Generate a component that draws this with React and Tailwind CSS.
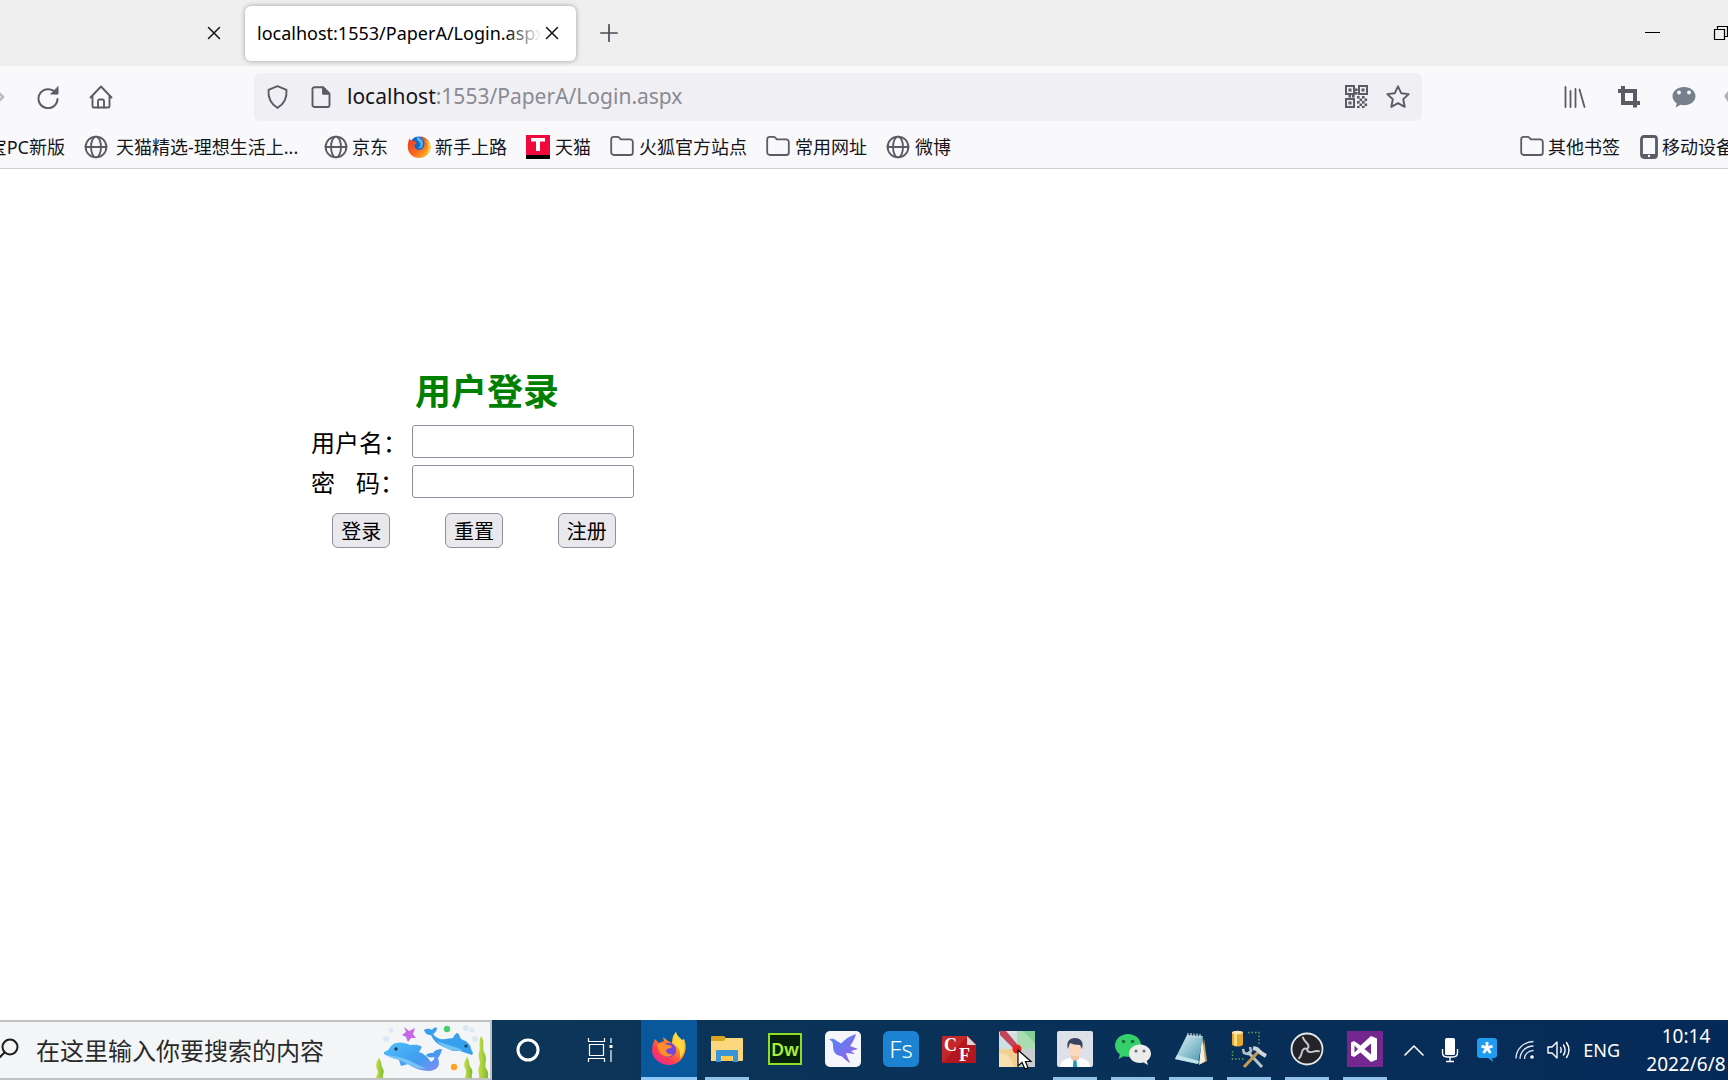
const ui = "font-['Noto_Sans','Noto_Sans_CJK_SC',sans-serif]";
const stroke = { fill: "none", stroke: "currentColor", strokeLinecap: "round", strokeLinejoin: "round" };

function CloseIcon() {
  return (
    <svg width="14" height="14" viewBox="0 0 14 14" {...stroke} strokeWidth="1.5" aria-hidden="true">
      <path d="M1.500 1.500l11 11M12.500 1.500l-11 11" />
    </svg>
  );
}

function Globe() {
  return (
    <svg className="shrink-0" width="24" height="24" viewBox="0 0 24 24" {...stroke} strokeWidth="1.9" aria-hidden="true">
      <circle cx="12" cy="12" r="10.4" />
      <ellipse cx="12" cy="12" rx="5" ry="10.4" />
      <path d="M1.600 12h20.800" />
    </svg>
  );
}

function Folder() {
  return (
    <svg className="shrink-0" width="24" height="24" viewBox="0 0 24 24" {...stroke} strokeWidth="1.8" aria-hidden="true">
      <path d="M1.2 4.2a2.4 2.4 0 0 1 2.4-2.4h3.8c.8 0 1.4.3 1.900.9l1.500 1.700h9.400a2.6 2.6 0 0 1 2.600 2.600v10.400a2.600 2.600 0 0 1-2.600 2.600H3.800a2.600 2.600 0 0 1-2.600-2.600z" />
    </svg>
  );
}

function OldFirefox() {
  return (
    <svg className="shrink-0" width="24" height="24" viewBox="0 0 24 24" aria-hidden="true">
      <defs>
        <linearGradient id="foxOld" x1="0" y1="0" x2="1" y2="1">
          <stop offset="0" stopColor="#e8322f" />
          <stop offset=".55" stopColor="#fb6a1e" />
          <stop offset="1" stopColor="#ffd12e" />
        </linearGradient>
      </defs>
      <circle cx="11.500" cy="10" r="8.500" fill="#1668c4" />
      <path d="M10 2c-1 3 2 4 3 6s0 4-2 5c3 1 5-1 5-4 0-4-2-6-6-7z" fill="#4fb3ee" />
      <path d="M2.500 3.600l1.700 2.200c1.200-.5 2.400-.4 3.600.2l2 2.400-2.400 1.400c-.2 3.400 2 5.400 4.800 5.200 3.800-.2 6-3.600 5-8C16.600 4.500 15.500 3 13.500 1.400c6 .4 10 5.300 10 10.600 0 6-5 11-11.500 11S.8 18 .8 12c0-3.500.7-6.300 1.700-8.400z" fill="url(#foxOld)" />
      <path d="M18 5c4 4 4.500 10 0 14.500 4-1 5.500-4.500 5.500-7.500C23.500 9 21.500 6 18 5z" fill="#ffc93a" />
    </svg>
  );
}

function Bookmark({ icon, children, className = "" }) {
  return (
    <a href="#" className={`flex shrink-0 items-center gap-1 whitespace-nowrap ${className}`}>
      <span className="text-[#5b5b66]">{icon}</span>
      <span className="text-[#15141a]">{children}</span>
    </a>
  );
}

function TabBar() {
  return (
    <header className="flex h-[66px] items-center overflow-hidden bg-[#efefef] text-[#15141a]">
      <div className="flex w-[245px] shrink-0 justify-end pr-6">
        <button type="button" aria-label="关闭标签页"><CloseIcon /></button>
      </div>
      <div className="flex h-[55px] w-[331px] shrink-0 items-center rounded-md bg-white px-3 shadow-[0_0_5px_rgba(0,0,0,0.35)]">
        <div className="relative w-[284px] overflow-hidden whitespace-nowrap text-lg text-black">
          localhost:1553/PaperA/Login.aspx
          <span className="absolute inset-y-0 right-0 w-9 bg-linear-to-r from-transparent to-white" />
        </div>
        <button type="button" aria-label="关闭标签页" className="ml-1"><CloseIcon /></button>
      </div>
      <button type="button" aria-label="新建标签页" className="ml-6 text-[#4b4b55]">
        <svg width="18" height="18" viewBox="0 0 18 18" {...stroke} strokeWidth="1.7" aria-hidden="true">
          <path d="M9 .8v16.400M.8 9h16.400" />
        </svg>
      </button>
      <div className="ml-auto flex shrink-0 items-center gap-[52px] text-black">
        <button type="button" aria-label="最小化" className="h-4 w-4">
          <svg width="16" height="16" viewBox="0 0 16 16" aria-hidden="true"><path d="M0 7.500h15" stroke="currentColor" /></svg>
        </button>
        <button type="button" aria-label="还原" className="h-4 w-[15px] overflow-hidden">
          <svg width="18" height="16" viewBox="0 0 18 16" fill="none" stroke="currentColor" strokeWidth="1.2" aria-hidden="true">
            <path d="M1.500 4.500h10v10h-10zM4.500 4.500v-3h10v10h-3" />
          </svg>
        </button>
      </div>
    </header>
  );
}

function QrIcon() {
  const finders = [[0, 0], [13, 0], [0, 13]];
  const cells = [[12, 11], [17, 11], [14.500, 13.500], [19.500, 13.500], [12, 16], [17, 16], [14.500, 18.500], [19.500, 18.500], [12, 21], [17, 21], [10, 3.500], [10, 7], [3.500, 10], [7, 10]];
  return (
    <svg width="23" height="23" viewBox="0 0 23 23" aria-hidden="true">
      {finders.map(([x, y]) => (
        <g key={`${x}-${y}`}>
          <rect x={x + 1} y={y + 1} width="8" height="8" fill="none" stroke="currentColor" strokeWidth="2" />
          <rect x={x + 3.500} y={y + 3.500} width="3" height="3" fill="currentColor" />
        </g>
      ))}
      {cells.map(([x, y]) => <rect key={`${x}.${y}`} x={x} y={y} width="2.600" height="2.600" fill="currentColor" />)}
    </svg>
  );
}

function NavBar() {
  return (
    <nav className="flex h-[61px] items-center overflow-hidden text-[#5b5b66]">
      <div className="flex w-[254px] shrink-0 items-center">
        <button type="button" aria-label="前进" className="w-9 text-[#b9b9bf]">
          <svg width="5" height="12" viewBox="0 0 5 12" {...stroke} strokeWidth="2.500" aria-hidden="true"><path d="M-1 2l4 4-4 4" /></svg>
        </button>
        <button type="button" aria-label="刷新">
          <svg width="24" height="24" viewBox="0 0 24 24" {...stroke} strokeWidth="2" aria-hidden="true">
            <path d="M20 8.500A9.500 9.500 0 1 0 21.500 14" />
            <path d="M22 2v7h-7z" fill="currentColor" strokeWidth="1" />
          </svg>
        </button>
        <button type="button" aria-label="主页" className="ml-[29px]">
          <svg width="24" height="24" viewBox="0 0 24 24" {...stroke} strokeWidth="1.900" aria-hidden="true">
            <path d="M1.500 12.500L12 1.500l10.500 11M3.500 11v10.200a1.300 1.300 0 0 0 1.300 1.300h14.400a1.300 1.300 0 0 0 1.300-1.300V11" />
            <path d="M9 22.500v-6.500a1.500 1.500 0 0 1 1.500-1.500h3a1.500 1.500 0 0 1 1.500 1.500v6.500" />
          </svg>
        </button>
      </div>
      <div className="flex h-12 flex-1 items-center rounded-md bg-[#f0eff4] px-3">
        <svg width="23" height="24" viewBox="0 0 22 24" {...stroke} strokeWidth="1.900" aria-hidden="true">
          <path d="M11 1.200l9 3.600c.5 8-1.500 14-9 18C3.500 18.800 1.500 12.800 2 4.800z" />
        </svg>
        <svg className="ml-[22px]" width="20" height="22" viewBox="0 0 20 22" {...stroke} strokeWidth="1.900" aria-hidden="true">
          <path d="M3.500 1.200H12l6.500 6.500V19a2 2 0 0 1-2 2h-13a2 2 0 0 1-2-2V3.200a2 2 0 0 1 2-2z" />
          <path d="M12 1.500v6.200h6.200z" fill="currentColor" />
        </svg>
        <p className="ml-4 flex-1 whitespace-nowrap text-[21px] text-[#8a8a92]">
          <span className="text-[#15141a]">localhost</span>:1553/PaperA/Login.aspx
        </p>
        <button type="button" aria-label="二维码" className="mr-[18px]"><QrIcon /></button>
        <button type="button" aria-label="添加书签">
          <svg width="24" height="24" viewBox="0 0 24 24" {...stroke} strokeWidth="1.900" aria-hidden="true">
            <path d="M12 1.300l3.200 6.900 7.500.9-5.500 5.200 1.500 7.500L12 18.100l-6.700 3.700 1.500-7.500L1.300 9.100l7.500-.9z" />
          </svg>
        </button>
      </div>
      <div className="ml-[142px] flex shrink-0 items-center gap-8">
        <button type="button" aria-label="书库">
          <svg width="22" height="22" viewBox="0 0 22 22" {...stroke} strokeWidth="1.800" aria-hidden="true">
            <path d="M1.500 1v20M6.500 5v16M11.500 3v18M15.500 3.500L20.500 21" />
          </svg>
        </button>
        <button type="button" aria-label="截图">
          <svg width="22" height="22" viewBox="0 0 22 22" fill="none" stroke="currentColor" strokeWidth="4" aria-hidden="true">
            <path d="M0 5h17v16.500M5 0v17h17" />
          </svg>
        </button>
        <button type="button" aria-label="消息" className="text-[#75808c]">
          <svg width="24" height="22" viewBox="0 0 24 22" fill="currentColor" aria-hidden="true">
            <path d="M12 1C5.500 1 .5 5 .5 10.200c0 3 1.700 5.500 4.300 7.200L3.500 21.500l5-2.700c1 .3 2.200.4 3.500.4 6.500 0 11.500-4 11.500-9S18.500 1 12 1z" />
            <circle cx="7" cy="6.500" r="1.900" fill="#f9f9fc" />
            <circle cx="17" cy="6.500" r="1.900" fill="#f9f9fc" />
          </svg>
        </button>
        <svg className="-ml-1" width="4" height="12" viewBox="0 0 4 12" fill="#b0b2b8" aria-hidden="true"><path d="M4 0L0 5l4 6z" /></svg>
      </div>
    </nav>
  );
}

function BookmarksBar() {
  return (
    <div className="flex h-[42px] items-center overflow-hidden border-b border-[#cfcfd4] pb-0.5 text-lg">
      <div className="flex w-[65px] shrink-0 justify-end overflow-hidden whitespace-nowrap text-[#15141a]">
        <a href="#">淘宝PC新版</a>
      </div>
      <div className="ml-[19px] flex items-center gap-[19px]">
        <Bookmark icon={<Globe />} className="w-[221px]"><span className="ml-1">天猫精选-理想生活上...</span></Bookmark>
        <Bookmark icon={<Globe />}>京东</Bookmark>
        <Bookmark icon={<OldFirefox />}>新手上路</Bookmark>
        <Bookmark icon={
          <span className="flex h-6 w-6 items-start justify-center border-b-4 border-black bg-[#f0093a] text-white">
            <svg width="14" height="16" viewBox="0 0 14 16" aria-hidden="true"><path d="M0 3h14v3.500H9V16H5V6.500H0z" fill="currentColor" /></svg>
          </span>
        }><span className="ml-px">天猫</span></Bookmark>
        <Bookmark icon={<Folder />}><span className="ml-px">火狐官方站点</span></Bookmark>
        <Bookmark icon={<Folder />}><span className="ml-px">常用网址</span></Bookmark>
        <Bookmark icon={<Globe />}><span className="ml-px">微博</span></Bookmark>
      </div>
      <div className="ml-auto flex shrink-0 items-center gap-5">
        <Bookmark icon={<Folder />}>其他书签</Bookmark>
        <Bookmark className="w-[88px] overflow-hidden" icon={
          <svg width="18" height="24" viewBox="0 0 18 24" aria-hidden="true">
            <rect x="1.500" y="1.500" width="15" height="21" rx="2.500" fill="none" stroke="currentColor" strokeWidth="2.800" />
            <path d="M2 19h14v3H2z" fill="currentColor" />
            <circle cx="9" cy="21" r="1.200" fill="#fff" />
          </svg>
        }>移动设备上的书签</Bookmark>
      </div>
    </div>
  );
}

function LoginForm() {
  const field = "h-[33px] w-[222px] rounded-[3px] border border-[#8f8f9d] bg-white px-2 text-lg outline-none";
  const label = "w-[102px] shrink-0 pl-px";
  return (
    <form className="mt-[194px] ml-[305px] w-[338px] font-['Noto_Sans_CJK_SC',sans-serif] text-black" onSubmit={(e) => e.preventDefault()}>
      <h1 className="pl-[110px] text-4xl leading-[52px] font-bold text-[#008000]">用户登录</h1>
      <div className="mt-2.5 flex flex-col gap-[7px] pl-[5px] text-2xl leading-[33px]">
        <div className="flex items-center">
          <label htmlFor="user" className={label}>用户名：</label>
          <input id="user" type="text" className={field} />
        </div>
        <div className="flex items-center">
          <label htmlFor="pass" className={`${label} flex gap-[21px] pl-[3px]`}><span>密</span><span>码：</span></label>
          <input id="pass" type="password" className={field} />
        </div>
      </div>
      <div className="mt-[15px] grid grid-cols-3 justify-items-center text-xl">
        {["登录", "重置", "注册"].map((t) => (
          <button key={t} type={t === "登录" ? "submit" : t === "重置" ? "reset" : "button"} className="h-[35px] w-[58px] rounded-md border border-[#8f8f9d] bg-[#e9e9ed] leading-8">
            {t}
          </button>
        ))}
      </div>
    </form>
  );
}

function Dolphins() {
  return (
    <svg className="ml-auto shrink-0" width="116" height="56" viewBox="0 0 116 56" aria-hidden="true">
      <defs>
        <linearGradient id="dol" x1="0" y1="0" x2="1" y2="1">
          <stop offset="0" stopColor="#4fc0f8" />
          <stop offset=".6" stopColor="#3f9cf0" />
          <stop offset="1" stopColor="#8a8cf4" />
        </linearGradient>
        <linearGradient id="weed" x1="0" y1="0" x2="1" y2="0">
          <stop offset="0" stopColor="#c6de4a" />
          <stop offset="1" stopColor="#7dbb2c" />
        </linearGradient>
      </defs>
      <g fill="#dbe9f5">
        <circle cx="12" cy="17" r="3" /><circle cx="17" cy="8" r="2.500" /><circle cx="92" cy="6" r="3" /><circle cx="98" cy="8" r="2.500" /><circle cx="101" cy="17" r="3" />
      </g>
      <path d="M30 5l5 4 6-3-2 6 3 4-5 0-3 4-2-5-4-2 4-3z" fill="#c56ae6" />
      <path d="M10 30C14 29 15 27 17 24 21 19 30 20 36 23 40 23 44 22 48 25L45 30C51 32 54 36 57 40 60 38 61 36 60 35 56 36 53 35 52 33 54 31 57 31 59 31 61 28 64 27 68 27 67 31 66 34 64 36 67 44 63 49 54 49 44 48 38 45 34 42L27 44 25 38C18 36 13 34 10 32z" fill="url(#dol)" />
      <path d="M12 33c8 1 14 2 20 4 8 3 13 7 20 9-7 2-14-1-19-4l-8-4c-5-1-10-3-13-5z" fill="#8ad2fa" opacity=".7" />
      <circle cx="22" cy="27" r="1.700" fill="#143a5c" />
      <path d="M50 8C53 6 56 7 58 8 59 6 61 5 63 6 63 9 61 11 59 12 62 16 66 18 71 17L79 16C80 13 82 11 84 11 85 13 86 15 87 17 94 19 97 24 97 27L99 31 98 33C94 32 90 30 86 29L79 29 72 26C66 24 60 20 57 13 53 13 51 11 50 8z" fill="#36a0ee" />
      <path d="M63 19c8 4 18 5 26 9l-3 1c-9 0-18-3-23-10z" fill="#8ad2fa" opacity=".7" />
      <circle cx="92" cy="24" r="1.600" fill="#143a5c" />
      <circle cx="73" cy="7" r="3.200" fill="#47cf74" />
      <circle cx="80" cy="45" r="3.200" fill="#ffa31f" />
      <g fill="url(#weed)">
        <path d="M5 36c3 4 2 8 4 11 2 4-1 5 0 9H2c1-4 3-5 1-9s0-8 2-11z" />
        <path d="M93 35c3 4 1 7 4 11s0 6 1 10h-7c1-4 2-6 0-10s0-7 2-11z" />
        <path d="M107 14c5 6 0 12 4 18 3 7-2 10 2 16 2 4 1 5 1 8h-9c1-4-2-6 0-11 3-6-2-9 0-14 2-7-1-11 2-17z" />
      </g>
    </svg>
  );
}

function FirefoxLogo() {
  return (
    <svg width="36" height="36" viewBox="0 0 36 36" aria-hidden="true">
      <defs>
        <linearGradient id="fx" x1=".85" y1=".1" x2=".2" y2=".9">
          <stop offset="0" stopColor="#ffe14d" />
          <stop offset=".4" stopColor="#ff8a2b" />
          <stop offset=".75" stopColor="#ff3f4f" />
          <stop offset="1" stopColor="#e92b8a" />
        </linearGradient>
      </defs>
      <path d="M4 8l4 4 5-2-1-4 5 4 4 2c0-5 1-8 4-11 1 5 4 5 6 8l2-1c2 5 2 9 1 13-2 8-8 13-16 13S1 28 1 20c0-5 1-8 3-12z" fill="url(#fx)" />
      <path d="M21 12c3-6 2-8 4-11 1 5 5 6 7 11 2 6 1 11-3 15 1-7-2-12-8-15z" fill="#ffd83f" />
      <circle cx="18" cy="19" r="7.200" fill="#7348d8" />
      <path d="M7 13c3-2 6-1 9 1 2 0 4 0 5 2-2 2-5 1-6 3 0 3 3 5 7 4-3 4-10 3-13-1-2-3-3-6-2-9z" fill="#ff8d2c" />
    </svg>
  );
}

function ExplorerLogo() {
  return (
    <svg width="34" height="30" viewBox="0 0 34 30" aria-hidden="true">
      <path d="M1 3a1 1 0 0 1 1-1h12l2 2v4H1z" fill="#d9a520" />
      <path d="M1 7h13l2-3h16a1 1 0 0 1 1 1v21a1 1 0 0 1-1 1H1z" fill="#fbd77e" />
      <path d="M6 28V17a1 1 0 0 1 1-1h20a1 1 0 0 1 1 1v11h-5v-6H11v6z" fill="#3a94d6" />
      <path d="M12 22h10v5H12z" fill="#ffc84a" />
    </svg>
  );
}

function DwLogo() {
  return <span className="flex h-8 w-[34px] items-center justify-center border-2 border-[#8ce01f] bg-[#07200b] text-lg leading-none font-semibold text-[#a8f23c]">Dw</span>;
}

function BirdLogo() {
  return (
    <svg width="36" height="36" viewBox="0 0 36 36" aria-hidden="true">
      <defs>
        <linearGradient id="bird" x1="0" y1="0" x2="1" y2="1">
          <stop offset="0" stopColor="#4a8cf6" />
          <stop offset="1" stopColor="#9d5be8" />
        </linearGradient>
      </defs>
      <rect width="36" height="36" rx="5" fill="#f4f6fc" />
      <path d="M4 8.500c3-1.500 5-1 7 1l5 3C20 8 25 5 31 3c-1 4-3 8-6 12l8 3-7 2 4 3-9-1c1 4 3 7 4 10-5-3-7-6-9-7C9 24 8 19 8 14c0-3-1-4-4-5.500z" fill="url(#bird)" />
    </svg>
  );
}

function FsLogo() {
  return <span className="flex h-9 w-9 items-center justify-center rounded-md bg-[#1c83d2] text-2xl leading-none font-light text-white">Fs</span>;
}

function CfLogo() {
  return (
    <svg width="36" height="32" viewBox="0 0 36 32" aria-hidden="true">
      <path d="M1 3h26l8 8v19H1z" fill="#b3161d" />
      <path d="M1 3h26L1 30z" fill="#c4272a" />
      <path d="M26 3l9 9h-9z" fill="#d8d8d8" />
      <g fill="#fff" fontFamily="Liberation Serif, serif" fontWeight="bold">
        <text x="3" y="18" fontSize="18">C</text>
        <text x="18" y="28" fontSize="18">F</text>
      </g>
    </svg>
  );
}

function MapLogo() {
  return (
    <span className="relative block h-9 w-9">
      <svg width="36" height="36" viewBox="0 0 36 36" aria-hidden="true">
        <rect width="36" height="36" rx="2" fill="#e6e6e6" />
        <path d="M0 2h18v16H0z" fill="#cfe0e4" />
        <path d="M18 0h18v18H18z" fill="#a9dcb0" />
        <path d="M24 0h12v12z" fill="#84cf94" />
        <path d="M0 18h18v18H0z" fill="#f4cf94" />
        <path d="M0 22c8 0 14 6 14 14H0z" fill="#f9dfb0" />
        <path d="M18 18h18v18H18z" fill="#c9cdd0" />
        <path d="M1 0h6l11 13-4 4L1 4z" fill="#c2455a" />
        <circle cx="18" cy="18" r="4.500" fill="#e3251f" />
      </svg>
      <svg className="absolute top-[18px] left-[18px]" width="16" height="22" viewBox="0 0 16 22" aria-hidden="true">
        <path d="M1 1v16l4-3.500L8 20l3-1.300L8.500 12.500H14z" fill="#fff" stroke="#000" strokeWidth="1.200" />
      </svg>
    </span>
  );
}

function PersonLogo() {
  return (
    <svg width="36" height="36" viewBox="0 0 36 36" aria-hidden="true">
      <rect width="36" height="36" rx="2" fill="#dfe1e8" />
      <path d="M3 36c1-6 4-8 10-9h10c6 1 9 3 10 9z" fill="#fff" />
      <path d="M14 22h8v6l-4 3-4-3z" fill="#f3c6a6" />
      <ellipse cx="18" cy="18" rx="6" ry="7.500" fill="#fad9bf" />
      <path d="M11 18c-2-7 1-11 7-11s9 4 7 11l-2-4c-4 0-8-1-10-2z" fill="#3a4464" />
      <path d="M16.500 29.500h3l.6 6.500h-4.200z" fill="#1a9bb8" />
    </svg>
  );
}

function WechatLogo() {
  return (
    <svg width="38" height="34" viewBox="0 0 38 34" aria-hidden="true">
      <path d="M14 2C7 2 1 7 1 13.500c0 3.600 1.900 6.700 4.900 8.900L4.500 27l5.400-2.800c1.300.4 2.700.6 4.100.6 7.200 0 13-5 13-11.400S21.200 2 14 2z" fill="#35cf6c" />
      <circle cx="9.500" cy="9.500" r="1.800" fill="#14713a" /><circle cx="18.500" cy="9.500" r="1.800" fill="#14713a" />
      <path d="M26 12.500c-6 0-11 4-11 9.300s5 9.300 11 9.300c1.300 0 2.500-.2 3.600-.5l4.400 2.400-1.200-4c2.600-1.700 4.200-4.300 4.200-7.200 0-5.300-5-9.300-11-9.300z" fill="#ececec" />
      <circle cx="22" cy="19" r="1.500" fill="#6e6e6e" /><circle cx="30" cy="19" r="1.500" fill="#6e6e6e" />
    </svg>
  );
}

function NotepadLogo() {
  return (
    <svg width="34" height="34" viewBox="0 0 34 34" aria-hidden="true">
      <defs>
        <linearGradient id="note" x1="0" y1="0" x2="1" y2="1">
          <stop offset="0" stopColor="#e6f5f8" />
          <stop offset="1" stopColor="#3f93ab" />
        </linearGradient>
      </defs>
      <path d="M30 6l3 23-6 3z" fill="#c8a15c" />
      <path d="M28 4l3 25-6 4z" fill="#f1efe6" />
      <path d="M13 3l16 1-5 28L1 27z" fill="url(#note)" />
      <path d="M1 27l23 5 1-3L3 23z" fill="#c4e4ec" />
      <path d="M14 1v4M17 1v4M20 1.500v4M23 1.500v4M26 2v4" stroke="#d5dde0" strokeWidth="1.200" />
    </svg>
  );
}

function ToolsLogo() {
  return (
    <svg width="36" height="38" viewBox="0 0 36 38" aria-hidden="true">
      <path d="M1 2h11v13q-5.500 3-11 0z" fill="#e7a92c" /><path d="M3 2h3v14l-3-.5z" fill="#fbdc86" />
      <ellipse cx="6.500" cy="2.500" rx="5.500" ry="1.800" fill="#f9e6b0" />
      <path d="M17 2.500h11v13M1.500 21v8h11" fill="none" stroke="#5aa355" strokeWidth="1.500" strokeDasharray="1.500 2" />
      <path d="M17 22l14 15" stroke="#b9c3cc" strokeWidth="3" />
      <path d="M12 19l1 4 4 1 3-3-1-4" fill="none" stroke="#b9c3cc" strokeWidth="2.500" />
      <path d="M13 37l14-15" stroke="#c79a4c" strokeWidth="3" />
      <path d="M22 18l4 1 4 4 5 3" fill="none" stroke="#cdd5db" strokeWidth="4" />
    </svg>
  );
}

function ObsLogo() {
  return (
    <svg width="34" height="34" viewBox="0 0 34 34" aria-hidden="true">
      <circle cx="17" cy="17" r="15.500" fill="#25232a" stroke="#e8e8ea" strokeWidth="1.800" />
      <g fill="none" stroke="#c9c9ce" strokeWidth="1.900" strokeLinecap="round">
        {[0, 120, 240].map((a) => (
          <path key={a} d="M17 17c1.500-1 2-2.500 1-4.500-1.500-2.500-4-3-5-7" transform={`rotate(${a} 17 17)`} />
        ))}
      </g>
    </svg>
  );
}

function VsLogo() {
  return (
    <svg width="36" height="36" viewBox="0 0 36 36" aria-hidden="true">
      <path d="M0 0h36v36H0z" fill="#74278f" />
      <path d="M24 5l6 2.500v21L24 31 13.500 21.500 7 26l-3-1.500v-13L7 10l6.500 4.500zM7.500 14.500v7L11 18zM24 12.500L17.500 18l6.500 5.500z" fill="#fff" fillRule="evenodd" />
    </svg>
  );
}

const apps = [
  { name: "Firefox", icon: <FirefoxLogo />, active: true },
  { name: "文件资源管理器", icon: <ExplorerLogo />, open: true },
  { name: "Dreamweaver", icon: <DwLogo /> },
  { name: "飞鸟", icon: <BirdLogo /> },
  { name: "FastStone", icon: <FsLogo /> },
  { name: "CF", icon: <CfLogo /> },
  { name: "地图", icon: <MapLogo /> },
  { name: "用户", icon: <PersonLogo />, open: true },
  { name: "微信", icon: <WechatLogo />, open: true },
  { name: "记事本", icon: <NotepadLogo />, open: true },
  { name: "SQL 工具", icon: <ToolsLogo />, open: true },
  { name: "OBS", icon: <ObsLogo />, open: true },
  { name: "Visual Studio", icon: <VsLogo />, open: true },
];

function Taskbar() {
  return (
    <footer className="flex h-[60px] items-stretch overflow-hidden bg-linear-to-r from-[#103a58] to-[#062a58] text-white">
      <label className="flex w-[492px] shrink-0 items-center border-y-2 border-r-2 border-[#bfc1c2] bg-[#f3f5f7] text-[#1d1d1d]">
        <svg className="shrink-0" width="20" height="24" viewBox="0 0 20 24" {...stroke} strokeWidth="2" aria-hidden="true">
          <circle cx="10" cy="9" r="7.500" /><path d="M4.500 14.500L-1 20" />
        </svg>
        <input type="text" aria-label="搜索" placeholder="在这里输入你要搜索的内容" className="ml-4 w-[320px] bg-transparent pt-0.5 text-2xl outline-none placeholder:text-[#2a2a2a]" />
        <Dolphins />
      </label>
      <button type="button" aria-label="Cortana" className="flex w-[72px] shrink-0 items-center justify-center">
        <svg width="26" height="26" viewBox="0 0 26 26" aria-hidden="true"><circle cx="13" cy="13" r="10" fill="none" stroke="#fff" strokeWidth="3" /></svg>
      </button>
      <button type="button" aria-label="任务视图" className="flex w-[76px] shrink-0 items-center justify-center pr-1">
        <svg width="26" height="24" viewBox="0 0 26 24" fill="none" stroke="#fff" strokeWidth="1.200" aria-hidden="true">
          <path d="M1.500 0v3.500h16V0M1.500 24v-3.500h16V24M2.500 6.500h14v11h-14zM24 0v5M24 12v12" /><path d="M22.500 7h3v3h-3z" fill="#fff" stroke="none" />
        </svg>
      </button>
      <div className="grid w-[754px] shrink-0 grid-cols-13">
        {apps.map((a) => (
          <button key={a.name} type="button" aria-label={a.name} className={`mx-px flex flex-col items-center ${a.active ? "bg-[#08589b]" : ""}`}>
            <span className="flex flex-1 items-center">{a.icon}</span>
            <span className={`h-[3px] ${a.active ? "w-full bg-[#90c8f5]" : a.open ? "w-11 bg-[#94c3ea]" : ""}`} />
          </button>
        ))}
      </div>
      <div className="ml-auto flex shrink-0 items-center text-lg">
        <svg width="20" height="12" viewBox="0 0 20 12" {...stroke} strokeWidth="1.600" aria-hidden="true"><path d="M1 11l9-9 9 9" /></svg>
        <svg className="ml-[17px]" width="18" height="26" viewBox="0 0 18 26" aria-hidden="true">
          <rect x="4" y="1" width="10" height="17" rx="1.500" fill="#fff" />
          <path d="M1.500 12v3.500q0 4.500 4.500 4.500h6q4.500 0 4.500-4.500V12M9 20v4M5 24.500h8" fill="none" stroke="#fff" strokeWidth="1.400" />
        </svg>
        <svg className="ml-[18px]" width="20" height="24" viewBox="0 0 20 24" aria-hidden="true">
          <path d="M3 0h14a3 3 0 0 1 3 3v14a3 3 0 0 1-3 3h-2l1 4-5-4H3a3 3 0 0 1-3-3V3a3 3 0 0 1 3-3z" fill="#1f9bf0" />
          <path d="M10 4v6M4.500 8.200L10 10l5.500-1.800M6.500 15l3.500-5 3.500 5" stroke="#fff" strokeWidth="2.800" fill="none" />
        </svg>
        <svg className="ml-[18px]" width="20" height="20" viewBox="0 0 20 20" fill="none" stroke="#dfe8f2" strokeWidth="1.300" aria-hidden="true">
          <path d="M1 18.500C1 9 9 1.500 18.500 1.500M5 19c0-7.500 6-13 13.500-13M9.500 19c0-5 4-8.500 9-8.500" />
          <circle cx="17" cy="17" r="1.800" fill="#fff" stroke="none" />
        </svg>
        <svg className="ml-3" width="24" height="20" viewBox="0 0 24 20" {...stroke} strokeWidth="1.400" aria-hidden="true">
          <path d="M1 7h4l5-5v16l-5-5H1zM13.500 7.500q1.500 2.500 0 5M16.500 5q3.200 5 0 10M19.500 2.500q5 7.500 0 15" />
        </svg>
        <span className="ml-3">ENG</span>
        <time dateTime="2022-06-08T10:14" className="ml-6 flex w-[84px] flex-col items-center text-[19px] leading-7">
          <span>10:14</span><span>2022/6/8</span>
        </time>
      </div>
    </footer>
  );
}

export default function App() {
  return (
    <div className={`flex min-h-screen flex-col bg-white ${ui}`}>
      <div className="bg-[#f9f9fc]">
        <TabBar />
        <NavBar />
        <BookmarksBar />
      </div>
      <main className="flex-1"><LoginForm /></main>
      <Taskbar />
    </div>
  );
}
